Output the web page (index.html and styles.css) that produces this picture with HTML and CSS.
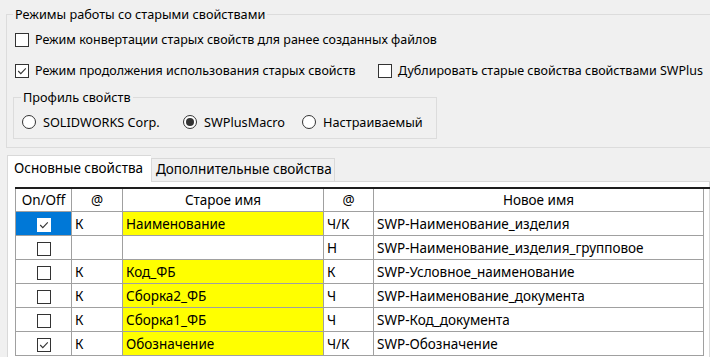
FILE: index.html
```html
<!DOCTYPE html>
<html lang="ru">
<head>
  <meta charset="UTF-8">
  <title>Режимы работы со старыми свойствами</title>
  <link rel="stylesheet" href="styles.css">
</head>
<body>
  <fieldset class="group modes">
    <legend>Режимы работы со старыми свойствами</legend>

    <div class="row">
      <label class="check"><span class="cb"></span>Режим конвертации старых свойств для ранее созданных файлов</label>
    </div>

    <div class="row row-two">
      <label class="check wide"><span class="cb on"><svg viewBox="0 0 12 12"><path d="M2.2 6 L4.8 8.6 L9.8 3.4"/></svg></span>Режим продолжения использования старых свойств</label>
      <label class="check"><span class="cb"></span>Дублировать старые свойства свойствами SWPlus</label>
    </div>

    <fieldset class="group profile">
      <legend>Профиль свойств</legend>
      <div class="radios">
        <label class="radio r1"><span class="rb"></span>SOLIDWORKS Corp.</label>
        <label class="radio r2"><span class="rb on"></span>SWPlusMacro</label>
        <label class="radio"><span class="rb"></span>Настраиваемый</label>
      </div>
    </fieldset>
  </fieldset>

  <div class="tabs">
    <div class="tab active">Основные свойства</div>
    <div class="tab">Дополнительные свойства</div>
  </div>

  <div class="panel">
    <table class="grid">
      <colgroup>
        <col class="w-on">
        <col class="w-at">
        <col class="w-old">
        <col class="w-at2">
        <col class="w-new">
        <col>
      </colgroup>
      <thead>
        <tr>
          <th>On/Off</th>
          <th>@</th>
          <th>Старое имя</th>
          <th>@</th>
          <th>Новое имя</th>
          <th class="c-fill"></th>
        </tr>
      </thead>
      <tbody id="rows"></tbody>
    </table>
  </div>

  <script>
    const rows = [
      { on: true,  at: "К", old: "Наименование", at2: "Ч/К", nw: "SWP-Наименование_изделия", sel: true },
      { on: false, at: "",  old: "",             at2: "Н",   nw: "SWP-Наименование_изделия_групповое" },
      { on: false, at: "К", old: "Код_ФБ",       at2: "К",   nw: "SWP-Условное_наименование" },
      { on: false, at: "К", old: "Сборка2_ФБ",   at2: "Ч",   nw: "SWP-Наименование_документа" },
      { on: false, at: "К", old: "Сборка1_ФБ",   at2: "Ч",   nw: "SWP-Код_документа" },
      { on: true,  at: "К", old: "Обозначение",  at2: "Ч/К", nw: "SWP-Обозначение" }
    ];

    const tick = '<svg viewBox="0 0 12 12"><path d="M2.2 6 L4.8 8.6 L9.8 3.4"/></svg>';

    // строим строки таблицы
    document.getElementById("rows").innerHTML = rows.map(r => `
      <tr>
        <td class="c-on${r.sel ? " sel" : ""}"><span class="cb${r.on ? " on" : ""}">${r.on ? tick : ""}</span></td>
        <td>${r.at}</td>
        <td class="${r.old ? "yellow" : ""}">${r.old}</td>
        <td>${r.at2}</td>
        <td>${r.nw}</td>
        <td class="c-fill"></td>
      </tr>
    `).join("");
  </script>
</body>
</html>
```

FILE: styles.css
```css
html, body {
  margin: 0;
  padding: 0;
  overflow: hidden;
}
body {
  font-family: "Noto Sans", sans-serif;
  font-size: 13px;
  line-height: 16px;
  color: #000;
  background-color: #f0f0f0;
  width: 710px;
  height: 357px;
}
.group {
  border: 1px solid #dcdcdc;
  margin: 0;
  min-width: 0;
}
.group legend {
  padding: 1px 2px 0;
  line-height: 15px;
  font-size: 12.7px;
}
.modes {
  margin: 6px -30px 0 6px;
  padding: 0 0 8px 6px;
}
.row {
  display: flex;
  align-items: center;
  height: 20px;
  margin-left: 2px;
}
.modes > legend + .row {
  margin-top: 8px;
}
.row-two {
  margin-top: 11px;
}
.check, .radio {
  display: flex;
  align-items: center;
  gap: 6px;
  white-space: nowrap;
}
.check {
  font-size: 12.5px;
}
.radio {
  font-size: 12.7px;
  gap: 7px;
}
.check.wide {
  width: 363px;
}
.cb {
  box-sizing: border-box;
  width: 14px;
  height: 14px;
  border: 1px solid #333;
  background-color: #fff;
  display: inline-flex;
  align-items: center;
  justify-content: center;
  flex: none;
}
.cb svg {
  width: 12px;
  height: 12px;
}
.cb svg path {
  fill: none;
  stroke: #333;
  stroke-width: 1.1;
}
.profile {
  margin: 8px 0 0 0;
  width: 424px;
  box-sizing: border-box;
  padding: 0 0 6px 7px;
}
.radios {
  display: flex;
  align-items: center;
  height: 20px;
  margin-top: 7px;
  margin-left: 1px;
}
.radio.r1 { width: 161px; }
.radio.r2 { width: 119px; }
.rb {
  box-sizing: border-box;
  width: 14px;
  height: 14px;
  border: 1px solid #333;
  border-radius: 50%;
  background-color: #fff;
  display: flex;
  align-items: center;
  justify-content: center;
  flex: none;
}
.rb.on::after {
  content: "";
  width: 8px;
  height: 8px;
  border-radius: 50%;
  background-color: #333;
}
.tabs {
  display: flex;
  align-items: flex-end;
  margin: 7px 0 0 7px;
  font-size: 13.5px;
}
.tab {
  box-sizing: border-box;
  height: 23px;
  line-height: 21px;
  padding: 0 4px;
  border: 1px solid #d9d9d9;
  border-bottom: none;
  background-color: #f0f0f0;
  width: 184px;
  white-space: nowrap;
}
.tab.active {
  position: relative;
  height: 27px;
  line-height: 24px;
  margin-bottom: -1px;
  padding: 0 6px;
  width: 144px;
  background-color: #fff;
  border-right: none;
}
.panel {
  margin-left: 7px;
  border: 1px solid #d9d9d9;
  background-color: #fff;
  padding: 5px 0 0 7px;
  height: 200px;
}
.grid {
  border-collapse: collapse;
  border-top: 2px solid #1e1e1e;
  border-left: 1px solid #1e1e1e;
  width: 700px;
  table-layout: fixed;
  font-size: 13.5px;
}
.w-on { width: 56px; }
.w-at { width: 51px; }
.w-old { width: 201px; }
.w-at2 { width: 50px; }
.w-new { width: 330px; }
.grid th, .grid td {
  border: 1px solid #a0a0a0;
  padding: 0 3px;
  height: 23px;
  font-weight: normal;
  white-space: nowrap;
  overflow: hidden;
  text-align: left;
}
.grid th {
  text-align: center;
  height: 22px;
}
.grid td.c-on {
  text-align: center;
  padding: 0;
}
.grid .c-fill {
  border: none;
  border-left: 1px solid #a0a0a0;
}
.grid td.c-on .cb {
  vertical-align: middle;
}
.grid td.sel {
  background-color: #0078d7;
}
.grid td.sel .cb {
  border-color: #fff;
}
.yellow {
  background-color: #ffff00;
}
```
